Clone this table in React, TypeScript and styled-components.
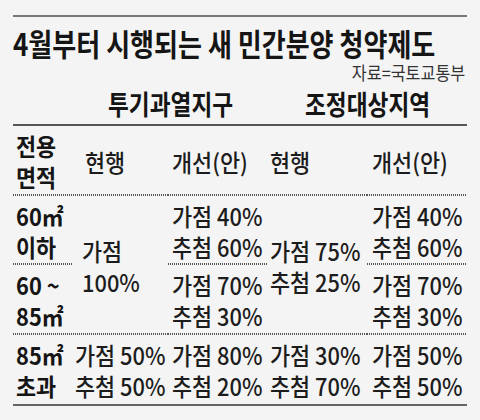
import styled, { createGlobalStyle } from "styled-components";

const GlobalStyle = createGlobalStyle`
  html, body {
    margin: 0;
    padding: 0;
    background: #f4f4f4;
  }
  body {
    font-family: "Noto Sans CJK KR", "Noto Sans", sans-serif;
    color: #1c1c1c;
  }
`;

const Page = styled.div`
  width: 480px;
  height: 420px;
  box-sizing: border-box;
  padding: 15px 13px 0;
  background: #f4f4f4;
  overflow: hidden;
`;

const TopRule = styled.div`
  height: 2px;
  background: #777;
`;

// the original face is a condensed gothic, so glyphs are narrowed with scaleX
const Title = styled.h1`
  margin: 10px 0 0;
  font-size: 31px;
  line-height: 32px;
  font-weight: 700;
  color: #151515;
  white-space: nowrap;
  transform: scaleX(0.84);
  transform-origin: left center;
`;

const Source = styled.div`
  margin-top: 3px;
  padding-right: 2px;
  text-align: right;
  font-size: 18px;
  line-height: 20px;
  color: #333;
  transform: scaleX(0.9);
  transform-origin: right center;
`;

const Table = styled.div`
  display: grid;
  grid-template-columns: 60px 95px 100px 99px 100px;
  grid-template-rows: 44px 70px 69px 70px 69px;
  border-bottom: 2px solid #666;
`;

type Line = "solid" | "dotted" | "none";

const dots = "repeating-linear-gradient(90deg, #555 0 1px, transparent 1px 2px) left bottom / 100% 2px no-repeat";

const Cell = styled.div<{ $line?: Line; $pad?: number; $rows?: number; $cols?: number }>`
  display: flex;
  flex-direction: column;
  justify-content: center;
  box-sizing: border-box;
  padding-left: ${(p) => p.$pad ?? 0}px;
  grid-row: span ${(p) => p.$rows ?? 1};
  grid-column: span ${(p) => p.$cols ?? 1};
  border-bottom: ${(p) => (p.$line === "solid" ? "2px solid #555" : "none")};
  background: ${(p) => (p.$line === "dotted" ? dots : "none")};
`;

const GroupHead = styled(Cell)`
  justify-content: flex-end;
  align-items: center;
  padding-bottom: 5px;
  font-size: 27px;
  line-height: 30px;
  font-weight: 700;
  color: #151515;
`;

const GroupText = styled.span`
  display: block;
  white-space: nowrap;
  transform: scaleX(0.84);
`;

const Label = styled(Cell)`
  font-size: 24px;
  line-height: 31px;
  font-weight: 700;
  color: #151515;
`;

const Head = styled(Cell)`
  font-size: 24px;
  line-height: 31px;
  font-weight: 500;
`;

const Value = styled(Cell)`
  font-size: 24px;
  line-height: 31px;
  font-weight: 500;
  white-space: nowrap;
`;

const Text = styled.span`
  display: block;
  transform: scaleX(0.91);
  transform-origin: left center;
`;

const pads = [3, 2, 4, 2, 5];

function Pair({ a, b }: { a: string; b: string }) {
  return (
    <>
      <Text>{a}</Text>
      <Text>{b}</Text>
    </>
  );
}

export default function App() {
  return (
    <Page>
      <GlobalStyle />
      <TopRule />
      <Title>4월부터 시행되는 새 민간분양 청약제도</Title>
      <Source>자료=국토교통부</Source>
      <Table>
        <GroupHead $line="solid" />
        <GroupHead $line="solid" $cols={2}>
          <GroupText>투기과열지구</GroupText>
        </GroupHead>
        <GroupHead $line="solid" $cols={2}>
          <GroupText>조정대상지역</GroupText>
        </GroupHead>

        <Label $line="dotted" $pad={pads[0]}>
          <Pair a="전용" b="면적" />
        </Label>
        <Head $line="dotted" $pad={12}>
          <Text>현행</Text>
        </Head>
        <Head $line="dotted" $pad={pads[2]}>
          <Text>개선(안)</Text>
        </Head>
        <Head $line="dotted" $pad={pads[3]}>
          <Text>현행</Text>
        </Head>
        <Head $line="dotted" $pad={pads[4]}>
          <Text>개선(안)</Text>
        </Head>

        <Label $line="dotted" $pad={pads[0]}>
          <Pair a="60㎡" b="이하" />
        </Label>
        <Value $line="dotted" $pad={9} $rows={2}>
          <Pair a="가점" b="100%" />
        </Value>
        <Value $line="dotted" $pad={pads[2]}>
          <Pair a="가점 40%" b="추첨 60%" />
        </Value>
        <Value $line="dotted" $pad={pads[3]} $rows={2}>
          <Pair a="가점 75%" b="추첨 25%" />
        </Value>
        <Value $line="dotted" $pad={pads[4]}>
          <Pair a="가점 40%" b="추첨 60%" />
        </Value>

        <Label $line="dotted" $pad={pads[0]}>
          <Pair a="60 ~" b="85㎡" />
        </Label>
        <Value $line="dotted" $pad={pads[2]}>
          <Pair a="가점 70%" b="추첨 30%" />
        </Value>
        <Value $line="dotted" $pad={pads[4]}>
          <Pair a="가점 70%" b="추첨 30%" />
        </Value>

        <Label $pad={pads[0]}>
          <Pair a="85㎡" b="초과" />
        </Label>
        <Value $pad={pads[1]}>
          <Pair a="가점 50%" b="추첨 50%" />
        </Value>
        <Value $pad={pads[2]}>
          <Pair a="가점 80%" b="추첨 20%" />
        </Value>
        <Value $pad={pads[3]}>
          <Pair a="가점 30%" b="추첨 70%" />
        </Value>
        <Value $pad={pads[4]}>
          <Pair a="가점 50%" b="추첨 50%" />
        </Value>
      </Table>
    </Page>
  );
}
